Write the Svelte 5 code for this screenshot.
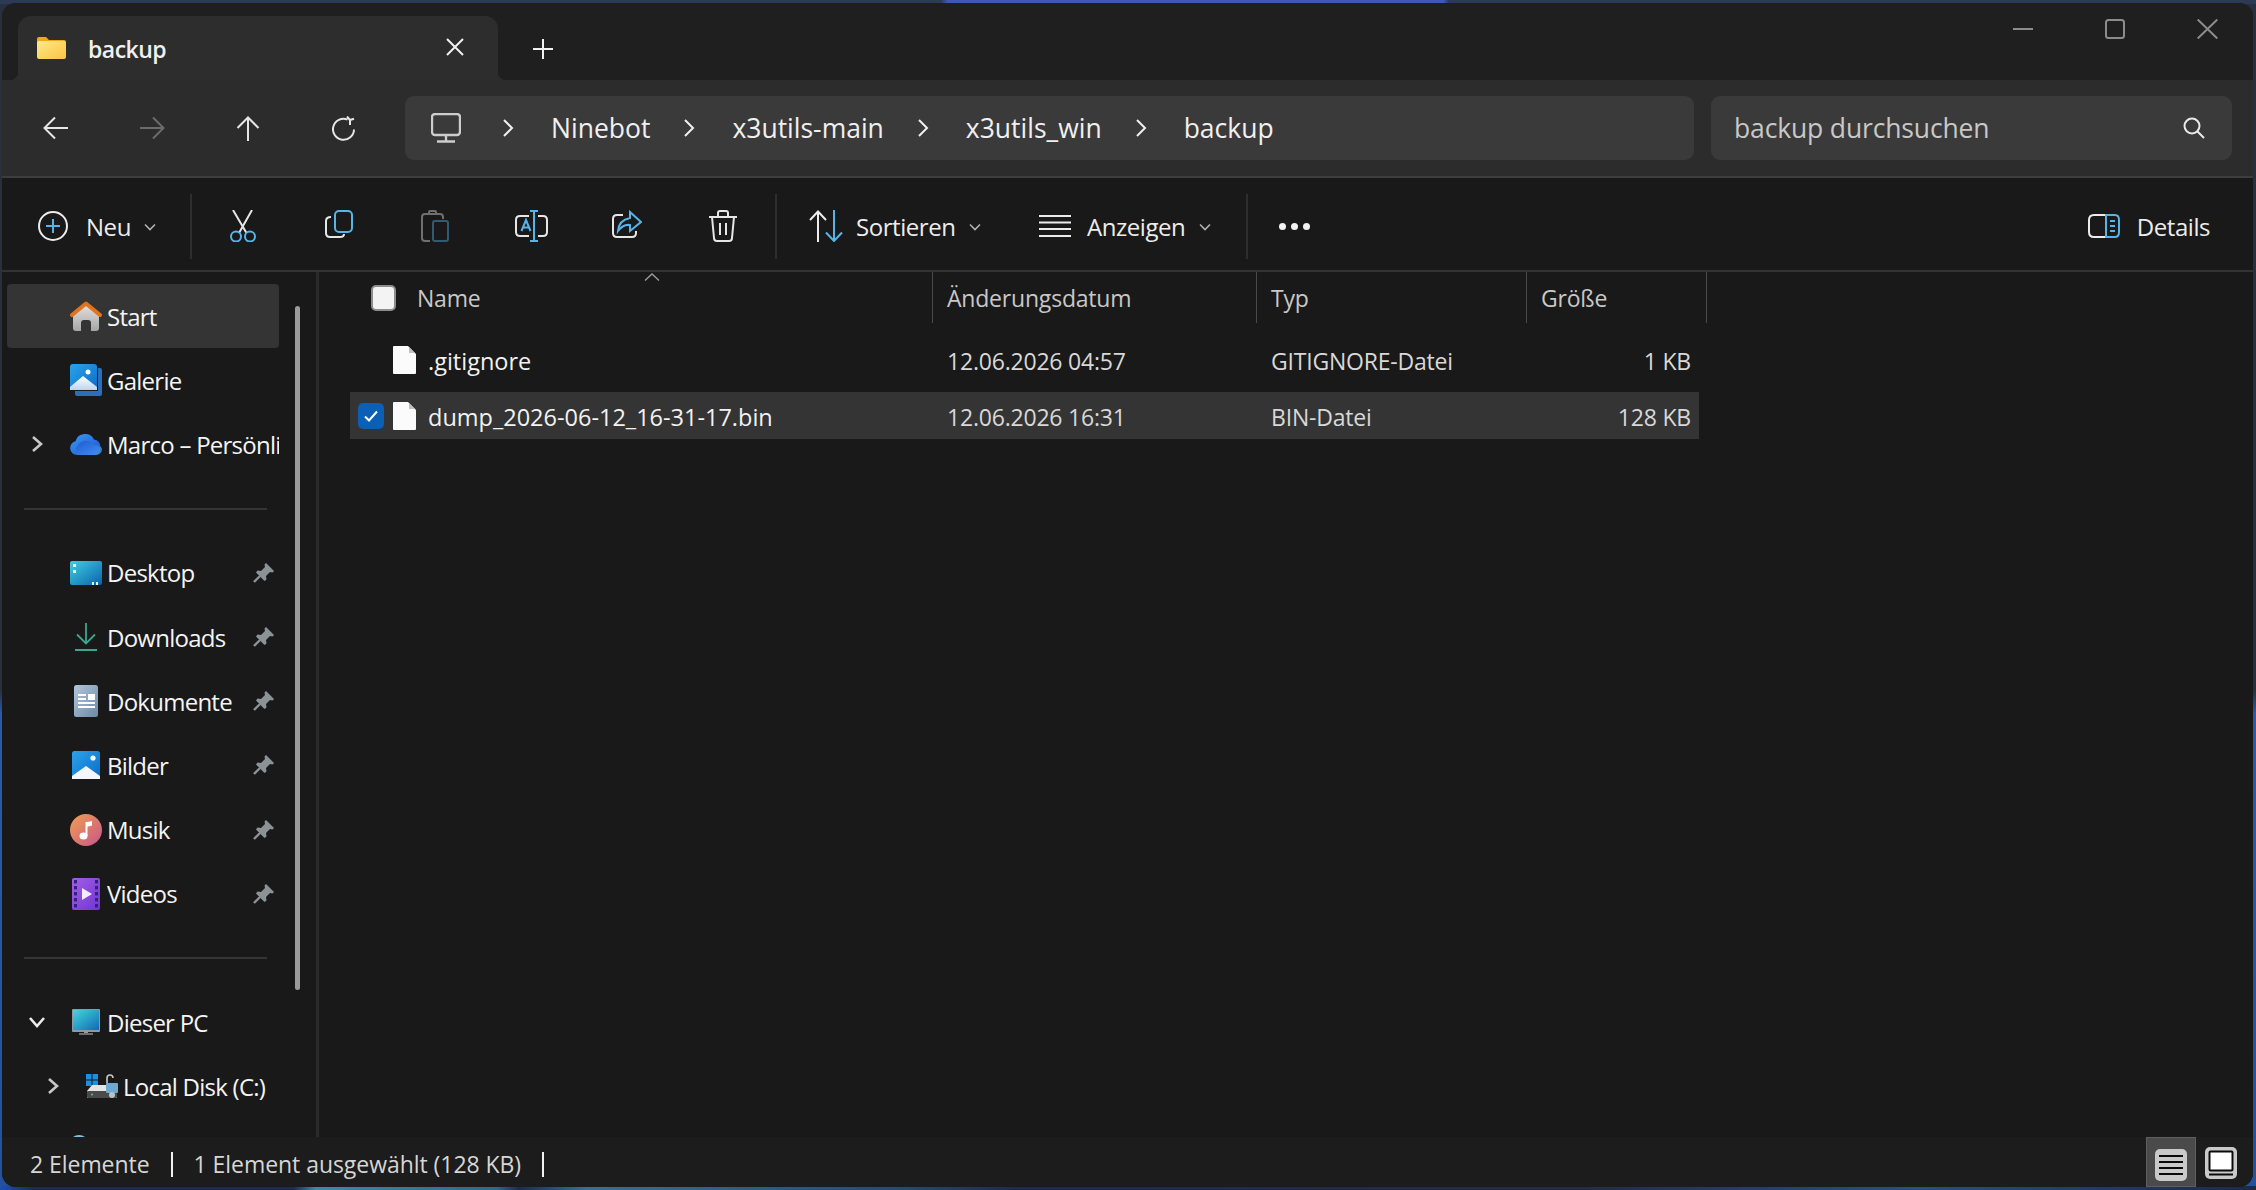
<script>
  const crumbs = ["Ninebot", "x3utils-main", "x3utils_win", "backup"];

  const places = [
    { type: "row", icon: "home", label: "Start", selected: true },
    { type: "row", icon: "gallery", label: "Galerie" },
    { type: "row", icon: "cloud", label: "Marco – Persönlich", chevron: "right" },
    { type: "sep" },
    { type: "row", icon: "desktop", label: "Desktop", pin: true },
    { type: "row", icon: "downloads", label: "Downloads", pin: true },
    { type: "row", icon: "docs", label: "Dokumente", pin: true },
    { type: "row", icon: "pics", label: "Bilder", pin: true },
    { type: "row", icon: "music", label: "Musik", pin: true },
    { type: "row", icon: "videos", label: "Videos", pin: true },
    { type: "sep" },
    { type: "row", icon: "pc", label: "Dieser PC", chevron: "down" },
    { type: "row", icon: "disk", label: "Local Disk (C:)", chevron: "right", sub: true },
    { type: "row", icon: "globe", label: "" }
  ];

  const files = [
    { name: ".gitignore", date: "12.06.2026 04:57", kind: "GITIGNORE-Datei", size: "1 KB" },
    { name: "dump_2026-06-12_16-31-17.bin", date: "12.06.2026 16:31", kind: "BIN-Datei", size: "128 KB", selected: true }
  ];
</script>

{#snippet chev()}
  <svg class="ln chev" width="14" height="10" viewBox="0 0 14 10"><path d="M2 2.5 7 7.5 12 2.5" /></svg>
{/snippet}

{#snippet fileIcon()}
  <svg width="23" height="28" viewBox="0 0 23 28"><path d="M0 1Q0 0 1 0H15L23 8V27Q23 28 22 28H1Q0 28 0 27Z" fill="#fbfbfb" /><path d="M16 1 22 7H16Z" fill="#bfbfbf" /></svg>
{/snippet}

{#snippet placeIcon(name)}
  {#if name === "home"}
    <svg width="32" height="30" viewBox="0 0 32 30">
      <defs><linearGradient id="homeBody" x1="0" y1="0" x2="0" y2="1"><stop offset="0" stop-color="#e0e0e0" /><stop offset="1" stop-color="#a6a6a6" /></linearGradient></defs>
      <path d="M3 14 16 4 29 14V27Q29 30 26 30H21V22Q21 19 18 19H14Q11 19 11 22V30H6Q3 30 3 27Z" fill="url(#homeBody)" />
      <path d="M2 14 16 2.5 30 14" fill="none" stroke="#e0731c" stroke-width="4" stroke-linecap="round" stroke-linejoin="round" />
    </svg>
  {:else if name === "gallery"}
    <svg width="32" height="32" viewBox="0 0 32 32">
      <defs>
        <linearGradient id="galFront" x1="0" y1="0" x2="1" y2="1"><stop offset="0" stop-color="#2ba3ea" /><stop offset="1" stop-color="#0c6cc6" /></linearGradient>
        <linearGradient id="galHill" x1="0" y1="0" x2="0" y2="1"><stop offset="0" stop-color="#ffffff" /><stop offset="1" stop-color="#bcd6f0" /></linearGradient>
      </defs>
      <path d="M28 4H30Q32 4 32 6V30Q32 32 30 32H7Q5 32 5 30V27H28Z" fill="#2a6fb8" />
      <rect width="27" height="26" rx="3" fill="url(#galFront)" />
      <path d="M0 26V23L13 12 27 23V26Z" fill="url(#galHill)" />
      <circle cx="18" cy="8" r="2.5" fill="#fff" />
    </svg>
  {:else if name === "cloud"}
    <svg width="32" height="22" viewBox="0 0 32 22">
      <defs>
        <linearGradient id="cloudA" x1="0" y1="0" x2="1" y2="1"><stop offset="0" stop-color="#3a9cf2" /><stop offset="1" stop-color="#1e4fd0" /></linearGradient>
        <linearGradient id="cloudB" x1="0" y1="0" x2="1" y2="1"><stop offset="0" stop-color="#1a4bcc" /><stop offset="1" stop-color="#4ca8f5" /></linearGradient>
      </defs>
      <path d="M7 22A7 7 0 0 1 5.5 8.2 10 10 0 0 1 24 6.5 8 8 0 0 1 25 22Z" fill="url(#cloudA)" />
      <path d="M7 22C4 16 8 9 14 8 18 7 22 9 24 12 28 12 32 14 32 16 32 20 29 22 25 22Z" fill="url(#cloudB)" opacity=".75" />
    </svg>
  {:else if name === "desktop"}
    <svg width="32" height="24" viewBox="0 0 32 24">
      <defs><linearGradient id="deskFill" x1="0" y1="0" x2="1" y2="1"><stop offset="0" stop-color="#3fd0e0" /><stop offset="1" stop-color="#0b62ae" /></linearGradient></defs>
      <rect width="32" height="24" rx="2" fill="url(#deskFill)" />
      <rect x="3" y="3" width="3" height="3" fill="#e8fbff" /><rect x="3" y="9" width="3" height="3" fill="#e8fbff" />
      <rect x="22" y="21" width="2" height="3" fill="#e8fbff" /><rect x="26" y="21" width="2" height="3" fill="#e8fbff" />
    </svg>
  {:else if name === "downloads"}
    <svg width="22" height="28" viewBox="0 0 22 28">
      <path d="M11 0V20M2 11.5 11 20.5 20 11.5M0 27H22" fill="none" stroke="#3aa78e" stroke-width="1.8" />
    </svg>
  {:else if name === "docs"}
    <svg width="24" height="32" viewBox="0 0 24 32">
      <defs><linearGradient id="docFill" x1="0" y1="0" x2="1" y2="1"><stop offset="0" stop-color="#b4c6dc" /><stop offset="1" stop-color="#6c89a6" /></linearGradient></defs>
      <rect width="24" height="32" rx="2.5" fill="url(#docFill)" />
      <rect x="14" y="9" width="7" height="6" fill="#fff" />
      <rect x="4" y="9" width="8" height="2" fill="#fff" /><rect x="4" y="13" width="8" height="2" fill="#fff" />
      <rect x="4" y="17" width="17" height="2" fill="#fff" /><rect x="4" y="21" width="17" height="2" fill="#fff" />
    </svg>
  {:else if name === "pics"}
    <svg width="28" height="28" viewBox="0 0 28 28">
      <defs><linearGradient id="picFill" x1="0" y1="0" x2="1" y2="1"><stop offset="0" stop-color="#2ba3ea" /><stop offset="1" stop-color="#0c6cc6" /></linearGradient></defs>
      <rect width="28" height="28" rx="2.5" fill="url(#picFill)" />
      <path d="M0 28V25L14 15 28 25V28Z" fill="#f4f8fd" />
      <circle cx="21" cy="7" r="2.6" fill="#fff" />
    </svg>
  {:else if name === "music"}
    <svg width="32" height="32" viewBox="0 0 32 32">
      <defs><linearGradient id="musFill" x1="0" y1="0" x2="1" y2="1"><stop offset="0" stop-color="#f0a050" /><stop offset="1" stop-color="#c8548c" /></linearGradient></defs>
      <circle cx="16" cy="16" r="16" fill="url(#musFill)" />
      <ellipse cx="13.5" cy="22" rx="4" ry="3.6" fill="#fff" />
      <path d="M15.5 22V8Q19 8 22 7V11.5Q19 12.5 17.5 12.5V22Z" fill="#fff" />
    </svg>
  {:else if name === "videos"}
    <svg width="28" height="32" viewBox="0 0 28 32">
      <defs><linearGradient id="vidFill" x1="0" y1="0" x2="1" y2="1"><stop offset="0" stop-color="#a35ee8" /><stop offset="1" stop-color="#6f36cf" /></linearGradient></defs>
      <rect width="28" height="32" rx="2" fill="url(#vidFill)" />
      {#each [2, 8, 14, 20, 26] as y}
        <rect x="2" y={y} width="3" height="3.4" fill="#34207a" />
        <rect x="23" y={y} width="3" height="3.4" fill="#34207a" />
      {/each}
      <path d="M10 10V22L20 16Z" fill="#f3ecff" />
    </svg>
  {:else if name === "pc"}
    <svg width="28" height="26" viewBox="0 0 28 26">
      <defs><linearGradient id="pcFill" x1="0" y1="0" x2="1" y2="1"><stop offset="0" stop-color="#45d6de" /><stop offset="1" stop-color="#0f6ab4" /></linearGradient></defs>
      <rect x="0" y="0" width="28" height="23" rx="1" fill="#8c9aa6" />
      <rect x="1" y="1" width="26" height="20" fill="url(#pcFill)" />
      <rect x="12" y="21" width="4" height="3" fill="#9a9a9a" /><rect x="7" y="24" width="14" height="2" fill="#6e6e6e" />
    </svg>
  {:else if name === "disk"}
    <svg width="32" height="24" viewBox="0 0 32 24">
      <rect x="0" y="0" width="5.5" height="5.5" fill="#1c8fe0" /><rect x="6.5" y="0" width="5.5" height="5.5" fill="#1c8fe0" />
      <rect x="0" y="6.5" width="5.5" height="5.5" fill="#1c8fe0" /><rect x="6.5" y="6.5" width="5.5" height="5.5" fill="#1c8fe0" />
      <path d="M6 11H28L31 17V24H1V17Z" fill="#e4e4e4" /><rect x="1" y="17" width="30" height="7" rx="1" fill="#4a4a4a" />
      <circle cx="6" cy="20.5" r="1" fill="#4cd964" />
      <path d="M21 9V4Q21 1 24 1T27 4" fill="none" stroke="#c8c8c8" stroke-width="1.6" />
      <rect x="20" y="9" width="12" height="10" rx="1" fill="#6fa9d2" /><circle cx="26" cy="21" r="3" fill="#b8c4cc" />
    </svg>
  {:else if name === "globe"}
    <svg width="32" height="32" viewBox="0 0 32 32"><circle cx="9" cy="10" r="10" fill="#7fc0e6" /></svg>
  {/if}
{/snippet}

<div class="desk">
  <div class="win">
    <header class="titlebar">
      <div class="tab">
        <svg width="29" height="22" viewBox="0 0 29 22">
          <defs><linearGradient id="folderFill" x1="0" y1="0" x2="1" y2="1"><stop offset="0" stop-color="#ffe88a" /><stop offset="1" stop-color="#f8c542" /></linearGradient></defs>
          <path d="M0 2Q0 0 2 0H9L12 3H27Q29 3 29 5V8H0Z" fill="#eeaa14" />
          <rect y="4" width="29" height="18" rx="2" fill="url(#folderFill)" />
        </svg>
        <span class="tabname">backup</span>
        <svg class="ln tabclose" width="18" height="18" viewBox="0 0 18 18"><path d="M1 1 17 17M17 1 1 17" /></svg>
      </div>
      <svg class="ln plus" width="20" height="20" viewBox="0 0 20 20"><path d="M10 0V20M0 10H20" /></svg>
      <div class="winbtns">
        <div class="winbtn"><svg class="ln" width="20" height="2" viewBox="0 0 20 2"><path d="M0 1H20" /></svg></div>
        <div class="winbtn"><svg class="ln" width="20" height="20" viewBox="0 0 20 20"><rect x="1" y="1" width="18" height="18" rx="2.5" /></svg></div>
        <div class="winbtn"><svg class="ln" width="21" height="20" viewBox="0 0 21 20"><path d="M.7 .5 20.3 19.5M20.3 .5 .7 19.5" /></svg></div>
      </div>
    </header>

    <div class="addr">
      <div class="navbtn"><svg class="ln" width="26" height="24" viewBox="0 0 26 24"><path d="M25 12H2M12 1.5 1.5 12 12 22.5" /></svg></div>
      <div class="navbtn dim"><svg class="ln" width="26" height="24" viewBox="0 0 26 24"><path d="M1 12H24M14 1.5 24.5 12 14 22.5" /></svg></div>
      <div class="navbtn"><svg class="ln" width="24" height="25" viewBox="0 0 24 25"><path d="M12 25V2M1.5 12 12 1.5 22.5 12" /></svg></div>
      <div class="navbtn"><svg class="ln" width="25" height="25" viewBox="0 0 25 25"><path d="M22 13.5A10.5 10.5 0 1 1 15.5 3.6M15 .5 18 4 22 2.8M18 4V9" /></svg></div>
      <div class="crumbbar">
        <svg class="ln monitor" width="30" height="30" viewBox="0 0 30 30">
          <rect x="1" y="1" width="28" height="21" rx="3" /><path d="M15 22V28M6 28.5H24" />
        </svg>
        {#each crumbs as crumb}
          <svg class="ln sepchev" width="12" height="20" viewBox="0 0 12 20"><path d="M2 2 10 10 2 18" /></svg>
          <span class="crumb">{crumb}</span>
        {/each}
      </div>
      <div class="search">
        <span>backup durchsuchen</span>
        <svg class="ln" width="22" height="22" viewBox="0 0 22 22"><circle cx="9" cy="9" r="7.5" /><path d="M14.5 14.5 21 21" /></svg>
      </div>
    </div>

    <div class="tools">
      <div class="tool neu">
        <svg class="ln" width="30" height="30" viewBox="0 0 30 30"><circle cx="15" cy="15" r="14" /><path class="acc" d="M15 8V22M8 15H22" /></svg>
        <span>Neu</span>
        {@render chev()}
      </div>
      <div class="tsep"></div>
      <div class="iconbtns">
        <div class="ib">
          <svg class="ln" width="28" height="32" viewBox="0 0 28 32">
            <path d="M4 0 17.5 23M23 0 10 23" /><circle class="acc" cx="7" cy="26.5" r="5" /><circle class="acc" cx="21" cy="26.5" r="5" />
          </svg>
        </div>
        <div class="ib">
          <svg class="ln" width="28" height="28" viewBox="0 0 28 28">
            <path d="M6 7Q1 7 1 11V23Q1 27 5 27H15Q19 27 19 24" /><rect class="acc" x="10" y="1" width="17" height="21" rx="4" />
          </svg>
        </div>
        <div class="ib off">
          <svg class="ln" width="28" height="32" viewBox="0 0 28 32">
            <path d="M9 31H4Q1 31 1 28V7Q1 4 4 4H19Q22 4 22 7V9M8 4V2Q8 1 9 1H14Q15 1 15 2V4Z" /><rect class="acc" x="12" y="11" width="15" height="20" rx="2" />
          </svg>
        </div>
        <div class="ib">
          <svg class="ln" width="33" height="32" viewBox="0 0 33 32">
            <path d="M14 6H5Q1 6 1 10V22Q1 26 5 26H14M23 6H28Q32 6 32 10V22Q32 26 28 26H23" />
            <path class="acc" d="M6.5 21 11 10 15.5 21M8 17.5H14M15 1H23M19 1V31M15 31H23" />
          </svg>
        </div>
        <div class="ib">
          <svg class="ln" width="30" height="28" viewBox="0 0 30 28">
            <path d="M11 5H5Q1 5 1 9V23Q1 27 5 27H20Q24 27 24 23V21" />
            <path class="acc" d="M18 2 29 12 18 21V15Q11 14 6 21 7 10 18 8Z" />
          </svg>
        </div>
        <div class="ib">
          <svg class="ln" width="28" height="32" viewBox="0 0 28 32">
            <path d="M0 7H28M9 6V3Q9 1 11 1H17Q19 1 19 3V6M3 7 5 28Q5 31 8 31H20Q23 31 23 28L25 7M11 13V25M17 13V25" />
          </svg>
        </div>
      </div>
      <div class="tsep wide"></div>
      <div class="tool sort">
        <svg class="ln" width="34" height="32" viewBox="0 0 34 32"><path d="M9 32V1.5M1 10 9 1.5 17 10" /><path class="acc" d="M25 0V31M17 22.5 25 31 33 22.5" /></svg>
        <span>Sortieren</span>
        {@render chev()}
      </div>
      <div class="tool view">
        <svg class="ln" width="32" height="22" viewBox="0 0 32 22"><path d="M0 1H32M0 7.5H32M0 14H32M0 21H32" /></svg>
        <span>Anzeigen</span>
        {@render chev()}
      </div>
      <div class="tsep"></div>
      <div class="dots"><i></i><i></i><i></i></div>
      <div class="tool details">
        <svg class="ln" width="32" height="24" viewBox="0 0 32 24">
          <path d="M18 1H6Q1 1 1 6V18Q1 23 6 23H18" />
          <path class="acc" d="M18 1H27Q31 1 31 6V18Q31 23 27 23H18ZM22 7H27M22 12H27M22 17H27" />
        </svg>
        <span>Details</span>
      </div>
    </div>

    <div class="body">
      <nav class="side">
        {#each places as p}
          {#if p.type === "sep"}
            <div class="sidesep"><hr /></div>
          {:else}
            <div class="place" class:selected={p.selected} class:sub={p.sub}>
              <span class="expander">
                {#if p.chevron === "right"}
                  <svg class="ln" width="12" height="18" viewBox="0 0 12 18"><path d="M2 2 10 9 2 16" /></svg>
                {:else if p.chevron === "down"}
                  <svg class="ln down" width="18" height="12" viewBox="0 0 18 12"><path d="M2 2 9 10 16 2" /></svg>
                {/if}
              </span>
              <span class="picon">{@render placeIcon(p.icon)}</span>
              <span class="plabel">{p.label}</span>
              {#if p.pin}
                <svg class="pin" width="21" height="20" viewBox="0 0 21 20">
                  <path d="M13 0 21 8 19.5 9.5 17 9 13 13 13.5 16.5 11.5 18 3 9.5 4.5 7.5 8 8 12 4 11.5 1.5Z" fill="#8b9397" />
                  <path d="M7 13 1 19" stroke="#8b9397" stroke-width="2.4" />
                </svg>
              {/if}
            </div>
          {/if}
        {/each}
        <div class="sidescroll"></div>
      </nav>

      <main class="list">
        <div class="caret"><svg class="ln" width="16" height="8" viewBox="0 0 16 8"><path d="M1 7.5 8 1 15 7.5" /></svg></div>
        <div class="thead">
          <div class="th first"><span class="box"></span><span>Name</span></div>
          <div class="th">Änderungsdatum</div>
          <div class="th">Typ</div>
          <div class="th">Größe</div>
        </div>
        {#each files as f}
          <div class="file" class:selected={f.selected}>
            <div class="fname">
              <span class="check">
                {#if f.selected}
                  <svg class="ln" width="14" height="12" viewBox="0 0 14 12"><path d="M1 6.5 5 10.5 13 1.5" /></svg>
                {/if}
              </span>
              {@render fileIcon()}
              <span class="fn">{f.name}</span>
            </div>
            <div class="fcell">{f.date}</div>
            <div class="fcell">{f.kind}</div>
            <div class="fcell fsize">{f.size}</div>
          </div>
        {/each}
      </main>
    </div>

    <footer class="status">
      <span>2 Elemente</span>
      <i class="bar"></i>
      <span>1 Element ausgewählt (128 KB)</span>
      <i class="bar"></i>
      <div class="modes">
        <div class="mode on">
          <svg width="32" height="32" viewBox="0 0 32 32"><rect width="32" height="32" rx="5" fill="#c9c9c9" /><path d="M4 7H28M4 13H28M4 19H28M4 25H28" stroke="#0a0a0a" stroke-width="2.2" /></svg>
        </div>
        <div class="mode">
          <svg width="32" height="32" viewBox="0 0 32 32"><rect width="32" height="32" rx="5" fill="#c9c9c9" /><rect x="4.5" y="4.5" width="23" height="19" rx="1" fill="#fff" stroke="#0a0a0a" stroke-width="2" /><path d="M4 27.5H28" stroke="#0a0a0a" stroke-width="2" /></svg>
        </div>
      </div>
    </footer>
  </div>
</div>

<style>
  :global(body) {
    margin: 0;
    background: #1b2b4a;
  }

  .desk {
    width: 2256px;
    height: 1190px;
    padding: 3px 3px 3px 2px;
    box-sizing: border-box;
    overflow: hidden;
    background:
      linear-gradient(90deg, #2b3b56 0%, #2b3b56 41.7%, #3c58b8 42%, #3c58b8 64%, #2b3b56 64.2%) top / 100% 4px no-repeat,
      linear-gradient(90deg, #1f4fb4 0%, #1e2c4a 1.5%, #1e2c4a 13%, #3f8a9e 14%, #2e6a88 22%, #1e2c4a 23%, #3a6f92 26%, #2a4a6a 40%, #1e2c4a 45%, #222c44 70%, #2c4f80 85%, #1c2a46 100%) bottom / 100% 4px no-repeat,
      linear-gradient(180deg, #26303f 0%, #26303f 58%, #2c5aa8 60%, #2450a0 100%);
    font-family: "Open Sans", "Noto Sans", sans-serif;
    color: #f0f0f0;
  }

  .win {
    height: 100%;
    display: flex;
    flex-direction: column;
    border-radius: 14px;
    overflow: hidden;
    background: #191919;
  }

  .ln path, .ln rect, .ln circle {
    fill: none;
    stroke: currentColor;
    stroke-width: 2;
  }

  .ln .acc {
    stroke: #56b4e8;
  }

  .titlebar {
    flex: 0 0 77px;
    display: flex;
    align-items: flex-start;
    background: #1f1f1f;
    padding-left: 16px;
  }

  .tab {
    position: relative;
    margin-top: 13px;
    width: 480px;
    height: 64px;
    box-sizing: border-box;
    padding-left: 19px;
    display: flex;
    align-items: center;
    background: #2d2d2d;
    border-radius: 13px 13px 0 0;
  }

  .tab::before, .tab::after {
    content: "";
    position: absolute;
    bottom: 0;
    width: 8px;
    height: 8px;
  }

  .tab::before {
    left: -8px;
    background: radial-gradient(circle at 0 0, transparent 8px, #2d2d2d 8.5px);
  }

  .tab::after {
    right: -8px;
    background: radial-gradient(circle at 100% 0, transparent 8px, #2d2d2d 8.5px);
  }

  .tabname {
    margin: 2px 0 0 22px;
    font-size: 23px;
    font-weight: 600;
    letter-spacing: -0.5px;
  }

  .tabclose {
    margin-left: auto;
    margin-right: 34px;
    margin-top: -2px;
  }

  .plus {
    margin: 36px 0 0 35px;
  }

  .winbtns {
    margin-left: auto;
    display: flex;
    color: #8c8c8c;
  }

  .winbtn {
    width: 92px;
    height: 52px;
    display: flex;
    align-items: center;
    justify-content: center;
  }

  .addr {
    flex: 0 0 96px;
    display: flex;
    align-items: center;
    padding: 0 21px 0 6px;
    background: #2c2c2c;
    border-bottom: 2px solid #3d3d3d;
  }

  .navbtn {
    width: 96px;
    display: flex;
    justify-content: center;
    color: #e6e6e6;
  }

  .navbtn.dim {
    color: #6c6c6c;
  }

  .crumbbar {
    flex: 1;
    height: 64px;
    margin-left: 13px;
    padding-left: 26px;
    display: flex;
    align-items: center;
    gap: 35px;
    background: #3a3a3a;
    border-radius: 9px;
    font-size: 26.5px;
  }

  .monitor {
    margin-right: 8px;
    color: #cdcdcd;
  }

  .monitor rect, .monitor path {
    stroke-width: 2.4;
  }

  .sepchev {
    margin: 0 2px 0 -2px;
  }

  .search {
    flex: 0 0 521px;
    height: 64px;
    margin-left: 17px;
    box-sizing: border-box;
    padding: 0 27px 0 23px;
    display: flex;
    align-items: center;
    justify-content: space-between;
    background: #3a3a3a;
    border-radius: 9px;
    font-size: 26.5px;
    letter-spacing: -0.15px;
    color: #c8c8c8;
  }

  .search svg {
    color: #eaeaea;
  }

  .tools {
    flex: 0 0 94px;
    box-sizing: border-box;
    padding-top: 4px;
    display: flex;
    align-items: center;
    background: #191919;
    border-bottom: 2px solid #333;
    color: #ececec;
    font-size: 24px;
    letter-spacing: -0.45px;
  }

  .tool {
    display: flex;
    align-items: center;
    height: 100%;
    box-sizing: border-box;
  }

  .chev {
    color: #b0b0b0;
    margin-top: 2px;
  }

  .chev path {
    stroke-width: 1.6;
  }

  .neu {
    width: 188px;
    padding-left: 36px;
    gap: 18px;
  }

  .neu .chev {
    margin-left: -6px;
  }

  .tsep {
    flex: 0 0 2px;
    height: 65px;
    background: #2e2e2e;
  }

  .tsep.wide {
    margin-left: 4px;
  }

  .iconbtns {
    display: flex;
    padding-left: 3px;
  }

  .ib {
    width: 96px;
    display: flex;
    justify-content: center;
    color: #e6e6e6;
  }

  .ib.off {
    opacity: 0.42;
  }

  .sort {
    width: 240px;
    padding-left: 32px;
    gap: 13px;
  }

  .view {
    width: 229px;
    padding-left: 22px;
    gap: 16px;
  }

  .sort .chev {
    margin-left: 0;
  }

  .view .chev {
    margin-left: -3px;
  }

  .dots {
    width: 92px;
    display: flex;
    justify-content: center;
    gap: 5px;
  }

  .dots i {
    width: 7px;
    height: 7px;
    border-radius: 50%;
    background: #f2f2f2;
  }

  .details {
    margin-left: auto;
    padding-right: 43px;
    gap: 17px;
  }

  .body {
    flex: 1;
    min-height: 0;
    display: flex;
    background: #191919;
  }

  .side {
    position: relative;
    flex: 0 0 317px;
    box-sizing: border-box;
    padding: 12px 0 0 5px;
    border-right: 3px solid #2a2a2a;
    overflow: hidden;
  }

  .place {
    width: 272px;
    height: 64.2px;
    display: flex;
    align-items: center;
    border-radius: 4px;
    font-size: 24px;
    letter-spacing: -0.75px;
    color: #f4f4f4;
  }

  .place.selected {
    background: #343434;
  }

  .expander {
    flex: 0 0 63px;
    box-sizing: border-box;
    padding-left: 24px;
    display: flex;
    color: #c8c8c8;
  }

  .place.sub .expander {
    flex-basis: 79px;
    padding-left: 40px;
  }

  .expander path {
    stroke-width: 2.6;
  }

  .down {
    margin-left: -3px;
    color: #ececec;
  }

  .picon {
    flex: 0 0 32px;
    display: flex;
    justify-content: center;
  }

  .plabel {
    margin-left: 5px;
    flex: 1;
    min-width: 0;
    overflow: hidden;
    white-space: nowrap;
  }

  .pin {
    flex: none;
    margin-right: 5px;
  }

  .sidesep {
    height: 64.2px;
    display: flex;
    align-items: center;
    padding-left: 17px;
  }

  .sidesep hr {
    width: 243px;
    height: 2px;
    margin: 0;
    border: 0;
    background: #353535;
  }

  .sidescroll {
    position: absolute;
    left: 293px;
    top: 34px;
    width: 5px;
    height: 684px;
    border-radius: 3px;
    background: #9b9b9b;
  }

  .list {
    position: relative;
    flex: 1;
    font-size: 23px;
    letter-spacing: -0.2px;
  }

  .caret {
    position: absolute;
    left: 325px;
    top: 0;
    line-height: 0;
    color: #9a9a9a;
  }

  .caret path {
    stroke-width: 1.4;
  }

  .thead {
    height: 51px;
    display: grid;
    grid-template-columns: 614px 324px 270px 180px;
    color: #c8c8c8;
  }

  .th {
    display: flex;
    align-items: center;
    gap: 21px;
    padding: 1px 0 0 14px;
    border-right: 1px solid #4a4a4a;
  }

  .th.first {
    padding-left: 52px;
  }

  .box {
    flex: 0 0 25px;
    height: 26px;
    box-sizing: border-box;
    border: 2px solid #8d8d8d;
    border-radius: 5px;
    background: #f3f3f3;
  }

  .file {
    width: 1349px;
    height: 47px;
    margin: 13px 0 0 31px;
    display: grid;
    grid-template-columns: 583px 324px 270px 172px;
    align-items: center;
    color: #d8d8d8;
  }

  .file + .file {
    margin-top: 9px;
  }

  .file.selected {
    background: #343434;
  }

  .fname {
    display: flex;
    align-items: center;
    padding-left: 8px;
    color: #f2f2f2;
  }

  .check {
    flex: 0 0 26px;
    height: 26px;
    margin-right: 9px;
    display: flex;
    align-items: center;
    justify-content: center;
    border-radius: 5px;
  }

  .file.selected .check {
    background: #0b5fb5;
  }

  .check svg {
    color: #fff;
  }

  .fn {
    margin: 3px 0 0 12px;
    font-size: 23.5px;
    letter-spacing: 0;
  }

  .fcell {
    padding: 3px 0 0 14px;
    white-space: nowrap;
  }

  .fsize {
    padding: 3px 8px 0 0;
    text-align: right;
  }

  .status {
    flex: 0 0 50px;
    display: flex;
    align-items: center;
    padding-left: 28px;
    background: #1c1c1c;
    font-size: 23px;
    letter-spacing: -0.05px;
    color: #d6d6d6;
  }

  .status span {
    margin-top: 4px;
  }

  .bar {
    flex: 0 0 2px;
    height: 25px;
    margin: 4px 21px 0;
    background: #f0f0f0;
  }

  .modes {
    margin-left: auto;
    display: flex;
    height: 100%;
    padding-right: 7px;
  }

  .mode {
    width: 50px;
    height: 50px;
    box-sizing: border-box;
    display: flex;
    align-items: center;
    justify-content: center;
  }

  .mode.on {
    padding-top: 6px;
    background: #4a4a4a;
    border: 1px solid #5e5e5e;
  }

  .mode:last-child {
    align-items: flex-start;
    padding-top: 10px;
  }
</style>
